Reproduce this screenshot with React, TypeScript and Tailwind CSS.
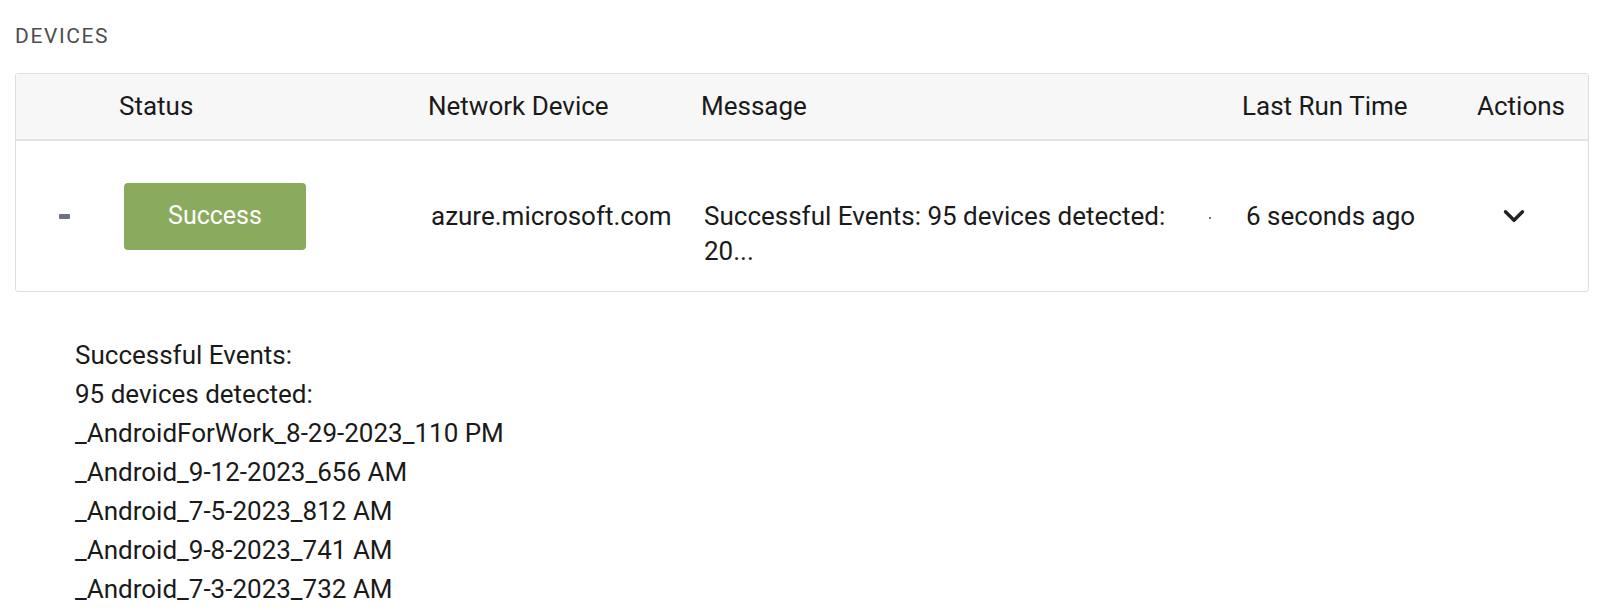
import { ChevronDown } from 'lucide-react';

const details = [
  'Successful Events:',
  '95 devices detected:',
  '_AndroidForWork_8-29-2023_110 PM',
  '_Android_9-12-2023_656 AM',
  '_Android_7-5-2023_812 AM',
  '_Android_9-8-2023_741 AM',
  '_Android_7-3-2023_732 AM',
];

const cols = 'grid grid-cols-[103px_309px_273px_541px_235px_1fr]';

export default function App() {
  return (
    <div className="min-h-screen bg-white text-[#1a1a1a] font-['Roboto',sans-serif]">
      <div className="pt-[24px] px-[15px]">
        <h3 className="text-[21px] leading-[24px] tracking-[1.6px] text-[#4d4d4d]">DEVICES</h3>

        <div className="mt-[25px] border border-[#dedede] rounded-[3px]">
          <div className={`${cols} items-center h-[67px] bg-[#f7f7f7] border-b-2 border-[#e4e4e4] text-[26px]`}>
            <div />
            <div>Status</div>
            <div>Network Device</div>
            <div>Message</div>
            <div>Last Run Time</div>
            <div>Actions</div>
          </div>

          <div className={`${cols} items-center h-[150px] text-[26px]`}>
            <div className="flex pl-[43px]">
              <span className="block w-[11px] h-[5px] rounded-[1px] bg-[#6b7280]" />
            </div>
            <div className="pl-[5px]">
              <button className="w-[182px] h-[67px] rounded-[4px] bg-[#8aab5d] text-white text-[25px]">
                Success
              </button>
            </div>
            <div className="pl-[3px]">azure.microsoft.com</div>
            <div className="flex items-start pl-[3px] pt-[35px]">
              <div className="w-[465px] leading-[35px]">
                Successful Events: 95 devices detected:
                <br />
                20...
              </div>
              <span className="ml-[40px] mt-[18px] block w-[2px] h-[2px] rounded-full bg-[#444]" />
            </div>
            <div className="pl-[4px]">6 seconds ago</div>
            <div className="flex pl-[20px]">
              <ChevronDown size={34} strokeWidth={2.4} className="text-[#222]" />
            </div>
          </div>
        </div>

        <div className="pt-[44px] pl-[60px] text-[26px] leading-[39px]">
          {details.map((line) => (
            <div key={line}>{line}</div>
          ))}
        </div>
      </div>
    </div>
  );
}
